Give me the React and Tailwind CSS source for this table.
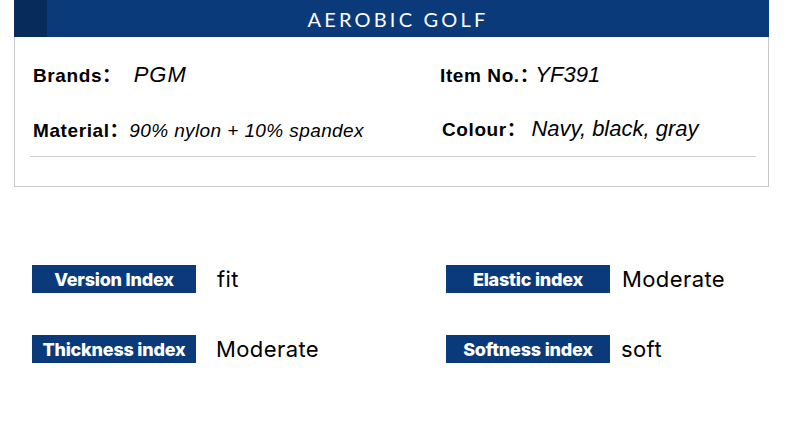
import React from 'react'

const label = "font-['Liberation_Sans','Noto_Sans_CJK_SC',sans-serif] font-bold text-[19px] text-black tracking-[0.6px]"
const value = "font-['Liberation_Sans',sans-serif] italic text-black"

function Badge({ title, val, gap }) {
  return (
    <div className="flex h-[28px] items-center">
      <div className="flex h-[28px] w-[164px] items-center justify-center bg-[#0a3a7a] font-['Inter',sans-serif] text-[18px] font-extrabold tracking-[-0.2px] text-white">
        {title}
      </div>
      <span className={`${gap} font-['Inter',sans-serif] text-[22px] leading-none tracking-[0.4px] text-black`}>{val}</span>
    </div>
  )
}

export default function App() {
  return (
    <div className="h-[429px] w-[790px] bg-white">
      {/* header */}
      <div className="ml-[14px] flex h-[37px] w-[755px] bg-[#0a3a7a]">
        <div className="h-full w-[33px] bg-[#072b5a]" />
        <div className="flex flex-1 items-center justify-center pr-[20px] font-['Lato',sans-serif] text-[20px] tracking-[0.16em] text-white">
          AEROBIC GOLF
        </div>
      </div>

      {/* spec box */}
      <div className="ml-[14px] h-[150px] w-[755px] border-x border-b border-[#c9c9c9] pl-[15px] pr-[12px]">
        <div className="flex h-[54px] items-end pl-[3px]">
          <div className="flex w-[407px] items-baseline">
            <span className={label}>Brands：</span>
            <span className={`${value} ml-[12px] text-[22px] tracking-[1px]`}>PGM</span>
          </div>
          <div className="flex items-baseline">
            <span className={label}>Item No.：</span>
            <span className={`${value} -ml-[4px] text-[22px]`}>YF391</span>
          </div>
        </div>
        <div className="flex h-[54px] items-end pl-[3px]">
          <div className="flex w-[409px] items-baseline">
            <span className={label}>Material：</span>
            <span className={`${value} ml-0 text-[19px] tracking-[0.4px]`}>90% nylon + 10% spandex</span>
          </div>
          <div className="flex items-baseline">
            <span className={label}>Colour：</span>
            <span className={`${value} ml-[5px] text-[22px]`}>Navy, black, gray</span>
          </div>
        </div>
        <div className="mt-[11px] h-px bg-[#cfcfcf]" />
      </div>

      {/* index badges */}
      <div className="mt-[78px] ml-[32px] grid w-[580px] grid-cols-[414px_1fr] gap-y-[42px]">
        <Badge title="Version Index" val="fit" gap="ml-[21px]" />
        <Badge title="Elastic index" val="Moderate" gap="ml-[12px]" />
        <Badge title="Thickness index" val="Moderate" gap="ml-[20px]" />
        <Badge title="Softness index" val="soft" gap="ml-[11px]" />
      </div>
    </div>
  )
}
